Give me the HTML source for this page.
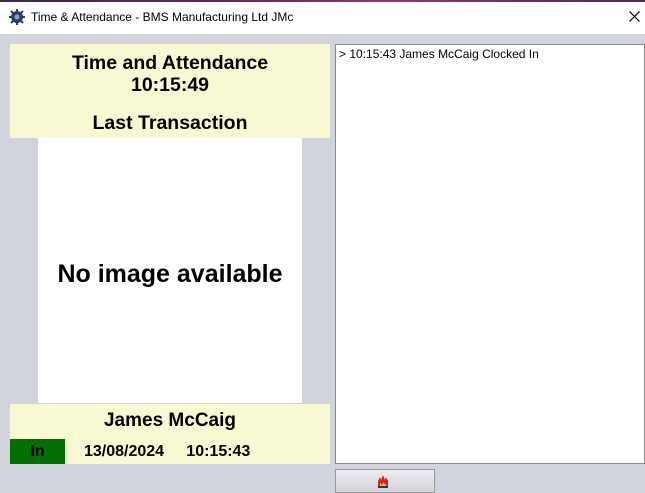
<!DOCTYPE html>
<html><head><style>
body{margin:0;width:645px;height:490px;overflow:hidden;background:#d1d4dc;font-family:"Liberation Sans",sans-serif;position:relative}
.a{position:absolute}
</style></head><body>
<div class="a" style="left:0;top:0;width:645px;height:34px;background:#fff"></div>
<div class="a" style="left:0;top:0;width:645px;height:2px;background:linear-gradient(90deg,#3a2a4a,#6a2a5a 40%,#8a3a6a 60%,#4a2a5a)"></div>
<svg class="a" style="left:9px;top:9px" width="16" height="16" viewBox="0 0 16 16"><circle cx="8" cy="8" r="6" fill="#2c3e66"/><circle cx="8" cy="8" r="2.5" fill="#8aa0c8"/><path d="M8 0v4M8 12v4M0 8h4M12 8h4M2 2l3 3M11 11l3 3M14 2l-3 3M2 14l3-3" stroke="#2c3e66" stroke-width="2"/></svg>
<div class="a" style="left:31px;top:10px;font-size:12px;color:#000">Time &amp; Attendance - BMS Manufacturing Ltd JMc</div>
<svg class="a" style="left:629px;top:11px" width="11" height="11" viewBox="0 0 11 11"><path d="M0.5 0.5L10.5 10.5M10.5 0.5L0.5 10.5" stroke="#000" stroke-width="1.2"/></svg>
<div class="a" style="left:10px;top:44px;width:320px;height:94px;background:#f8f8d2;text-align:center;font-weight:bold;font-size:19.5px;line-height:22px">
<div style="margin-top:8px">Time and Attendance</div><div>10:15:49</div><div style="margin-top:16px">Last Transaction</div></div>
<div class="a" style="left:38px;top:138px;width:264px;height:265px;background:#fff;text-align:center;font-weight:bold;font-size:25px;line-height:272px">No image available</div>
<div class="a" style="left:10px;top:404px;width:320px;height:60px;background:#f8f8d2;font-weight:bold;font-size:19px">
<div style="text-align:center;margin-top:6px">James McCaig</div>
<div class="a" style="left:0;top:35px;width:55px;height:25px;background:#007000;text-align:center;line-height:25px;font-size:16px">In</div>
<div class="a" style="left:74px;top:35px;line-height:25px;font-size:16px">13/08/2024&nbsp;&nbsp;&nbsp;&nbsp;&nbsp;10:15:43</div>
</div>
<div class="a" style="left:335px;top:44px;width:308px;height:418px;background:#fff;border:1px solid #8a8a8a"></div>
<div class="a" style="left:339px;top:47px;font-size:12px">&gt; 10:15:43 James McCaig Clocked In</div>
<div class="a" style="left:335px;top:469px;width:98px;height:22px;border:1px solid #999;background:linear-gradient(#ececf2,#d4d4dc)"></div>
<svg class="a" style="left:376px;top:474px" width="14" height="14" viewBox="0 0 14 14"><path d="M2 13V7l2-4 1 3 2-5 2 5 1-3 2 4v6z" fill="#e02020"/><path d="M4 13V9l2 2 1-3 2 3 1-2v4z" fill="#f0d020"/><rect x="2" y="12" width="10" height="2" fill="#2030a0"/></svg>
</body></html>
